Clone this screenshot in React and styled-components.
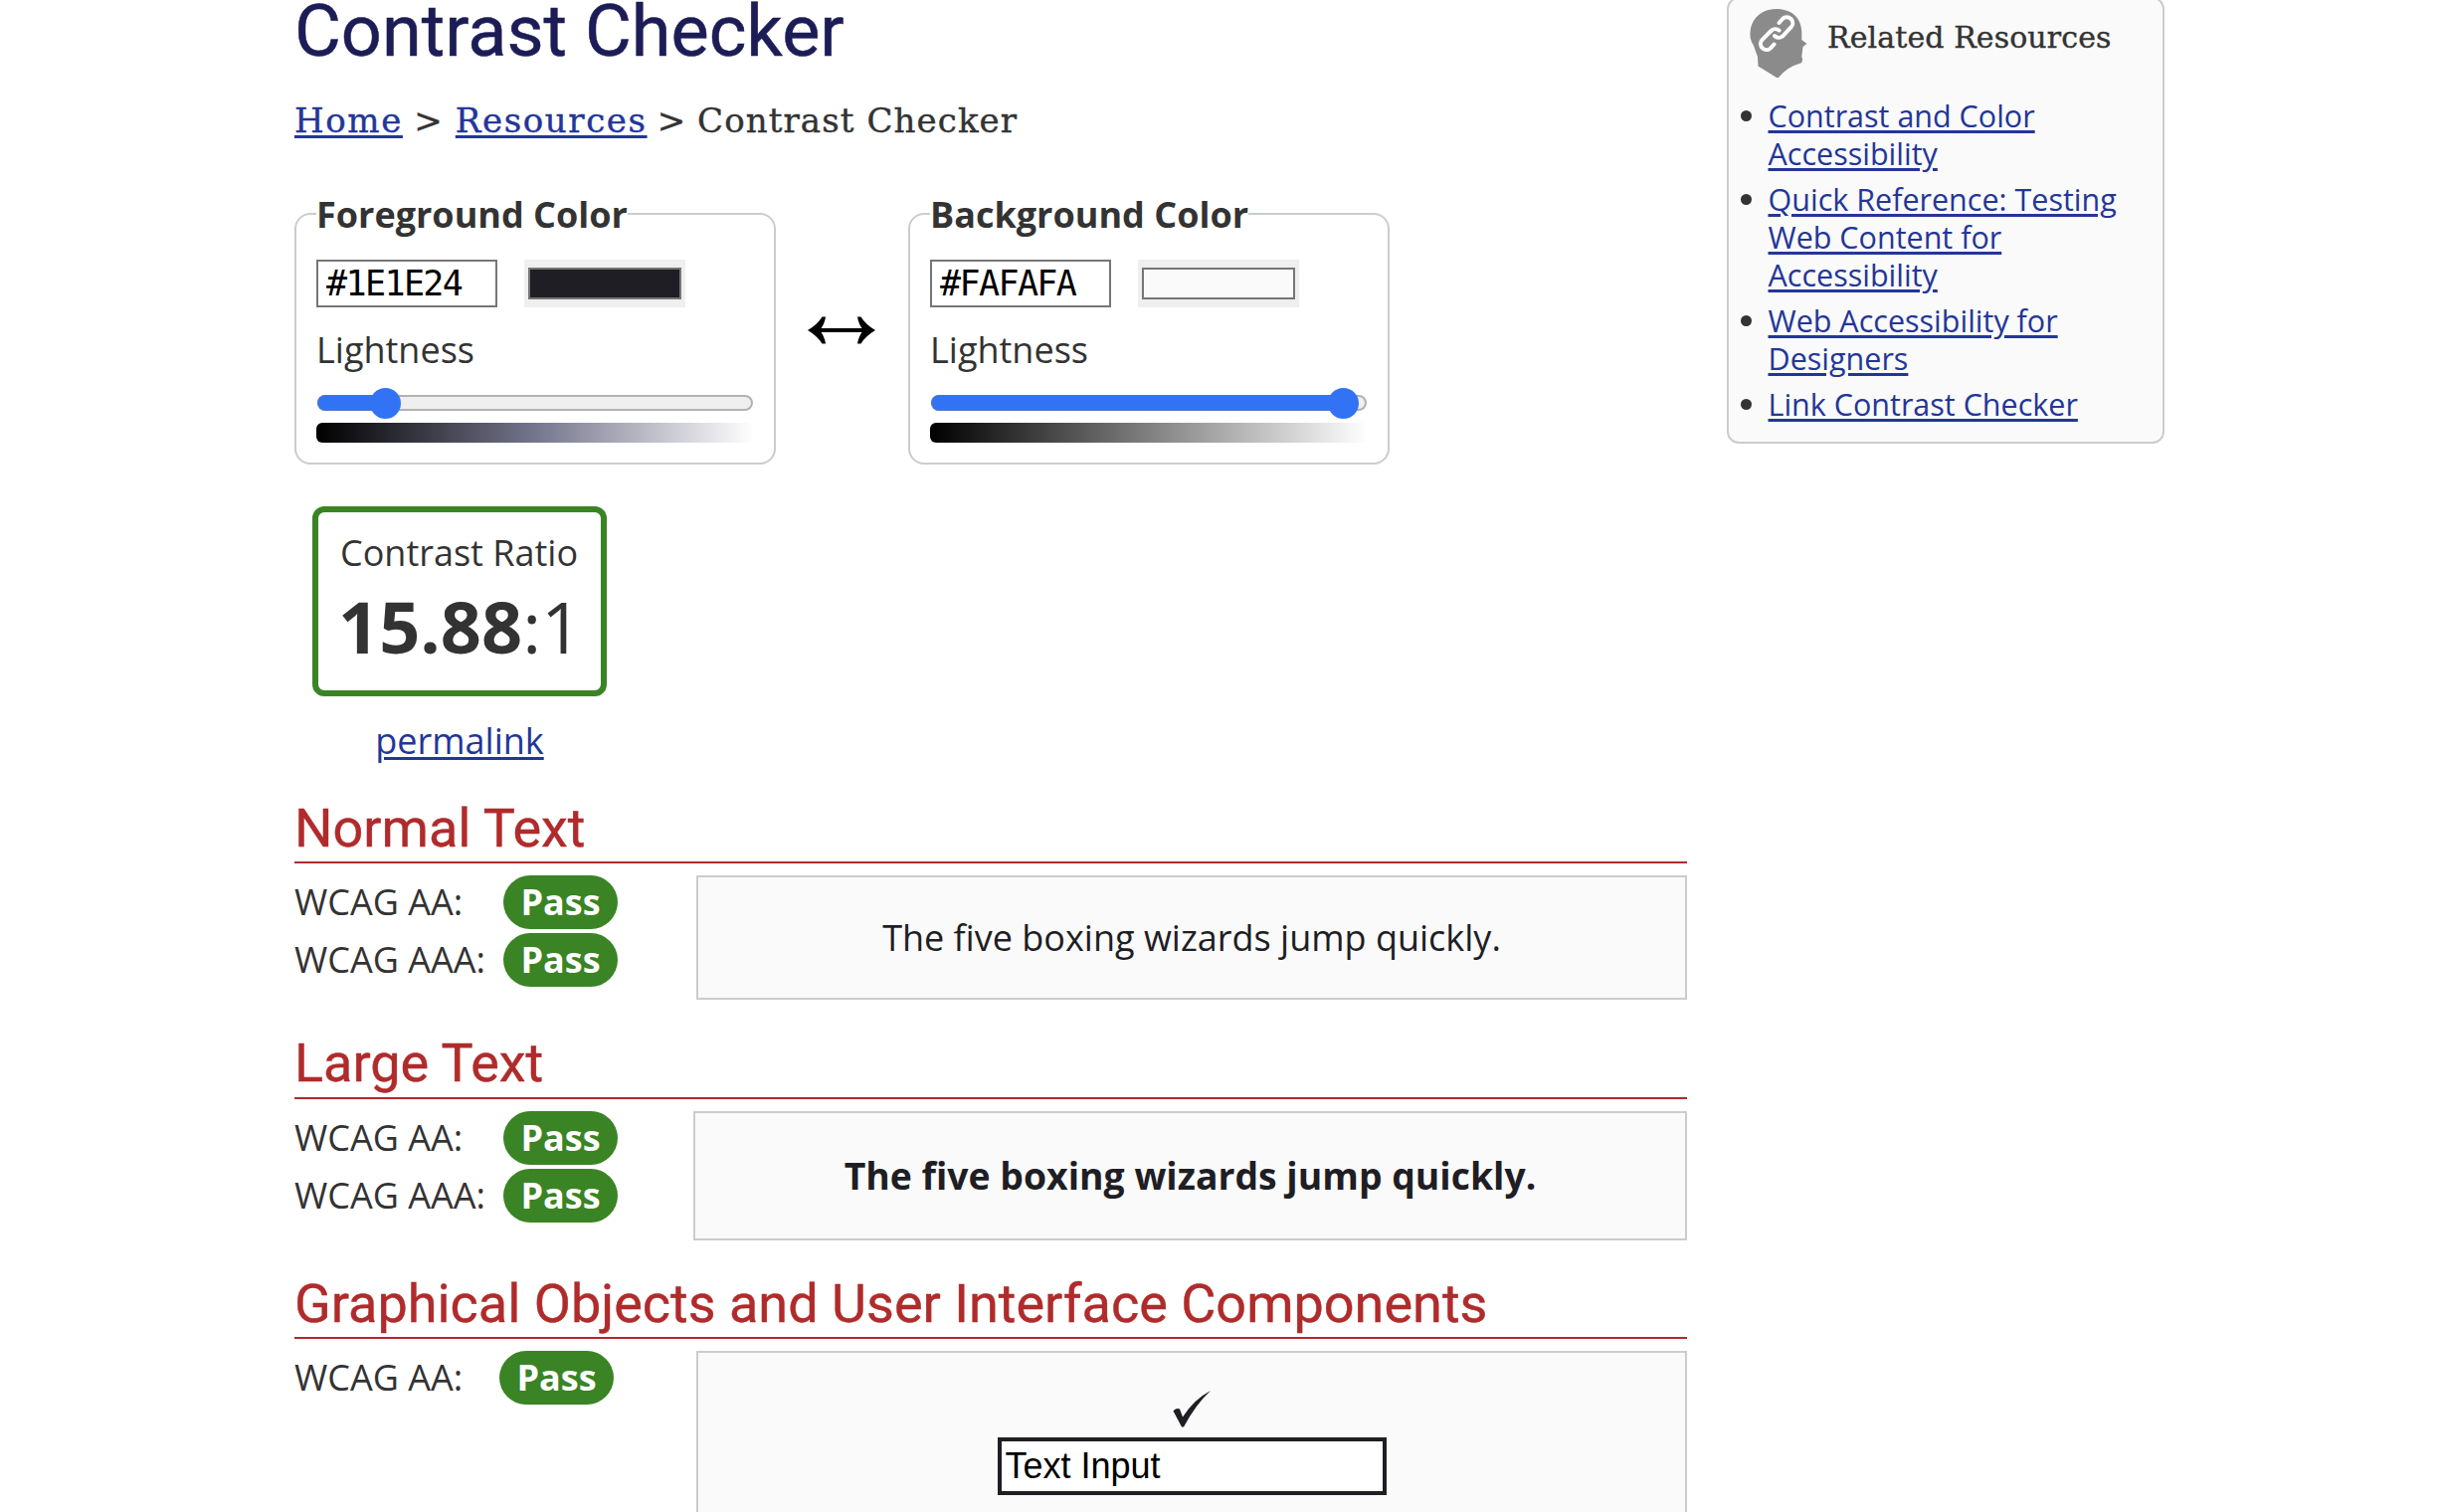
import React from "react";
import styled, { createGlobalStyle } from "styled-components";

const sans = '"Open Sans", "Noto Sans", sans-serif';
const slab = '"DejaVu Serif", serif';

const GlobalStyle = createGlobalStyle`
  * { box-sizing: border-box; }
  body {
    margin: 0;
    background: #fff;
    color: #333;
    font-family: ${sans};
    font-size: 36px;
    line-height: 54px;
  }
`;

const Page = styled.div`
  display: flex;
  align-items: flex-start;
  gap: 40px;
  height: 1520px;
  padding-left: 296px;
  overflow: hidden;
`;

const Main = styled.main`
  width: 1400px;
`;

const Title = styled.h1`
  margin: 0;
  font: 400 72px/64px Roboto, sans-serif;
  color: #1c1d57;
  -webkit-text-stroke: 0.5px #1c1d57;
`;

const Link = styled.a`
  color: #233698;
  text-decoration: underline;
  text-decoration-thickness: 2.5px;
  text-underline-offset: 3px;
`;

const Breadcrumb = styled.nav`
  display: flex;
  margin-top: 27px;
  font: 400 34px/60px ${slab};
  letter-spacing: 1.6px;
  white-space: nowrap;
  -webkit-text-stroke: 0.4px currentColor;
`;

const Separator = styled.span`
  margin: 0 ${(p) => p.$gap}px;
`;

const Current = styled.span`
  letter-spacing: 1.1px;
`;

const Pickers = styled.div`
  display: flex;
  margin-top: 38px;
`;

const Fieldset = styled.fieldset`
  width: 484px;
  height: 278px;
  margin: 0;
  padding: 0 20px;
  border: 2px solid #ccc;
  border-radius: 16px;
`;

const Legend = styled.legend`
  padding: 2px 0 0;
  font-weight: 700;
  line-height: 50px;
  white-space: nowrap;
`;

const Inputs = styled.div`
  display: flex;
  gap: 27px;
  margin-top: 20px;
`;

const HexInput = styled.input`
  width: 182px;
  height: 48px;
  padding: 0 8px 1px;
  border: 2px solid #767676;
  border-radius: 0;
  background: #fff;
  color: #000;
  font: 400 35px/43px "DejaVu Sans Mono", monospace;
  letter-spacing: -1.6px;
`;

const SwatchWell = styled.div`
  width: 162px;
  height: 48px;
  padding: 8px 4px;
  background: #efefef;
`;

const Swatch = styled.div`
  height: 32px;
  border: 2px solid #767676;
  background: ${(p) => p.$color};
`;

const SliderLabel = styled.div`
  margin-top: 18px;
  line-height: 50px;
`;

const Slider = styled.div`
  position: relative;
  display: flex;
  align-items: center;
  height: 32px;
  margin-top: 12px;
  padding: 0 1px;
`;

const Track = styled.div`
  flex: 1;
  height: 16px;
  border: 2px solid #b2b2b2;
  border-radius: 8px;
  background: #efefef;
`;

const Fill = styled.div`
  position: absolute;
  left: 1px;
  top: 8px;
  width: ${(p) => p.$at}px;
  height: 16px;
  border: 1.5px solid #5076c0;
  border-right: 0;
  border-radius: 8px 0 0 8px;
  background: #3273f6;
`;

const Thumb = styled.div`
  position: absolute;
  left: ${(p) => p.$at - 15.5}px;
  top: 0.5px;
  width: 31px;
  height: 31px;
  border-radius: 50%;
  background: #3273f6;
`;

const Ramp = styled.div`
  height: 20px;
  margin-top: 4px;
  border-radius: 6px;
  background: linear-gradient(to right, #000, ${(p) => p.$mid}, #fff);
`;

const Swap = styled.div`
  display: flex;
  width: 133px;
  justify-content: center;
  padding: 129px 2px 0 0;
`;

const RatioColumn = styled.div`
  width: 296px;
  margin: 42px 0 0 18px;
`;

const RatioBox = styled.div`
  height: 191px;
  padding: 14px 0 0 22px;
  border: 6px solid #3a8425;
  border-radius: 12px;
  white-space: nowrap;
`;

const RatioValue = styled.div`
  margin: 6px 0 0 -2px;
  font-size: 72px;
  line-height: 80px;
`;

const Permalink = styled.div`
  margin-top: 18px;
  text-align: center;
`;

const Heading = styled.h2`
  height: 66px;
  margin: ${(p) => p.$top}px 0 12px;
  border-bottom: 2px solid #b02b2b;
  color: #b02b2b;
  font: 400 54px/${(p) => p.$line || 61}px Roboto, sans-serif;
  white-space: nowrap;
  -webkit-text-stroke: 0.4px #b02b2b;
`;

const Result = styled.section`
  display: flex;
  justify-content: space-between;
  align-items: flex-start;
`;

const Levels = styled.div`
  display: grid;
  grid-template-columns: ${(p) => p.$label || 210}px 115px;
  row-gap: 4px;
  line-height: 54px;
  white-space: nowrap;
`;

const Pass = styled.span`
  height: 54px;
  border-radius: 27px;
  background: #3a8425;
  color: #fff;
  font-weight: 700;
  text-align: center;
`;

const Sample = styled.div`
  display: flex;
  flex-direction: column;
  align-items: center;
  justify-content: ${(p) => (p.$top ? "flex-start" : "center")};
  width: ${(p) => p.$width || 996}px;
  height: ${(p) => p.$height}px;
  padding-top: ${(p) => p.$top || 0}px;
  border: 2px solid #ccc;
  background: #fafafa;
  color: #1e1e24;
  font-size: ${(p) => (p.$large ? 37.333 : 36)}px;
  font-weight: ${(p) => (p.$large ? 700 : 400)};
`;

const DemoInput = styled.input`
  width: 391px;
  height: 58px;
  margin-top: 10px;
  padding: 0 4px;
  border: 4px solid #1e1e24;
  border-radius: 0;
  background: #fff;
  color: #000;
  font: 400 36px/50px "Liberation Sans", Arial, sans-serif;
`;

const Related = styled.aside`
  width: 440px;
  height: 449px;
  margin-top: -3px;
  padding: 10px 12px 0 11px;
  border: 2px solid #ccc;
  border-radius: 12px;
  background: #fafafa;
`;

const RelatedHead = styled.div`
  display: flex;
  gap: 20px;
  height: 70px;
  padding-left: 10px;
`;

const RelatedTitle = styled.h2`
  margin: -1px 0 0;
  font: 400 30px/60px ${slab};
  letter-spacing: 0.1px;
  white-space: nowrap;
  -webkit-text-stroke: 0.4px currentColor;
`;

const List = styled.ul`
  display: flex;
  flex-direction: column;
  gap: 7.4px;
  margin: 18px 0 0;
  padding: 0;
  list-style: none;
  font-size: 30.5px;
  line-height: 38.2px;
`;

const Item = styled.li`
  display: flex;
  gap: 16.5px;
  white-space: pre;
  &::before {
    content: "";
    flex: none;
    width: 11px;
    height: 11px;
    margin: 14px 0 0 1px;
    border-radius: 50%;
    background: #333;
  }
`;

const HeadIcon = () => (
  <svg width="58" height="70" viewBox="0 0 58 70">
    <path
      d="M27 0C42 0 52 9 52.300 23V31L57.500 35L53.500 38L52.300 48L53 50V51Q53 54 50 55Q38 58 29 69H27L8.500 57.500L8 48Q6 43 4 37Q0 31 0.500 24C1 9 13 0 27 0Z"
      fill="#8b8b8b"
    />
    <g fill="none" stroke="#fff" strokeWidth="4" strokeLinecap="round">
      <path d="M29.500 14L33 10A6 6 0 0 1 41.500 18.500L33 27.500A6 6 0 0 1 25 27" />
      <path d="M24.500 35.500L21.500 39A6 6 0 0 1 12.500 31L21.500 22A6 6 0 0 1 29.500 21.500" />
    </g>
  </svg>
);

const ColorPicker = ({ legend, hex, mid, at }) => (
  <Fieldset>
    <Legend>{legend}</Legend>
    <Inputs>
      <HexInput defaultValue={hex} />
      <SwatchWell>
        <Swatch $color={hex} />
      </SwatchWell>
    </Inputs>
    <SliderLabel>Lightness</SliderLabel>
    <Slider>
      <Track />
      <Fill $at={at} />
      <Thumb $at={at} />
    </Slider>
    <Ramp $mid={mid} />
  </Fieldset>
);

const related = [
  "Contrast and Color\nAccessibility",
  "Quick Reference: Testing\nWeb Content for\nAccessibility",
  "Web Accessibility for\nDesigners",
  "Link Contrast Checker",
];

const pangram = "The five boxing wizards jump quickly.";

export default function App() {
  return (
    <Page>
      <GlobalStyle />
      <Main>
        <Title>Contrast Checker</Title>
        <Breadcrumb>
          <Link>Home</Link>
          <Separator $gap={11.4}>&gt;</Separator>
          <Link>Resources</Link>
          <Separator $gap={10.2}>&gt;</Separator>
          <Current>Contrast Checker</Current>
        </Breadcrumb>

        <Pickers>
          <ColorPicker legend="Foreground Color" hex="#1E1E24" mid="#75758c" at={69} />
          <Swap>
            <svg width="68" height="28" viewBox="0 0 68 28">
              <path d="M8 14H60" stroke="#000" strokeWidth="4" />
              <path d="M0 14Q10 8 14.500 0.500H18Q17 8 12 14Q17 20 18 27.500H14.500Q10 20 0 14Z" />
              <path d="M68 14Q58 8 53.500 0.500H50Q51 8 56 14Q51 20 50 27.500H53.500Q58 20 68 14Z" />
            </svg>
          </Swap>
          <ColorPicker legend="Background Color" hex="#FAFAFA" mid="#808080" at={415} />
        </Pickers>

        <RatioColumn>
          <RatioBox>
            <div>Contrast Ratio</div>
            <RatioValue>
              <b>15.88</b>:1
            </RatioValue>
          </RatioBox>
          <Permalink>
            <Link>permalink</Link>
          </Permalink>
        </RatioColumn>

        <Heading $top={30}>Normal Text</Heading>
        <Result>
          <Levels>
            <span>WCAG AA:</span>
            <Pass>Pass</Pass>
            <span>WCAG AAA:</span>
            <Pass>Pass</Pass>
          </Levels>
          <Sample $height={125}>{pangram}</Sample>
        </Result>

        <Heading $top={34} $line={59}>
          Large Text
        </Heading>
        <Result>
          <Levels>
            <span>WCAG AA:</span>
            <Pass>Pass</Pass>
            <span>WCAG AAA:</span>
            <Pass>Pass</Pass>
          </Levels>
          <Sample $height={130} $width={999} $large>
            {pangram}
          </Sample>
        </Result>

        <Heading $top={33}>Graphical Objects and User Interface Components</Heading>
        <Result>
          <Levels $label={206}>
            <span>WCAG AA:</span>
            <Pass>Pass</Pass>
          </Levels>
          <Sample $height={240} $top={38}>
            <svg width="38" height="37" viewBox="0 0 38 37">
              <path
                d="M0.500 20.500L2 19Q5 17.500 7 18.500L10 26.500Q21 9 38 0Q23 14 11 36.500H9Z"
                fill="#1e1e24"
              />
            </svg>
            <DemoInput defaultValue="Text Input" />
          </Sample>
        </Result>
      </Main>

      <Related>
        <RelatedHead>
          <HeadIcon />
          <RelatedTitle>Related Resources</RelatedTitle>
        </RelatedHead>
        <List>
          {related.map((text) => (
            <Item key={text}>
              <Link>{text}</Link>
            </Item>
          ))}
        </List>
      </Related>
    </Page>
  );
}
